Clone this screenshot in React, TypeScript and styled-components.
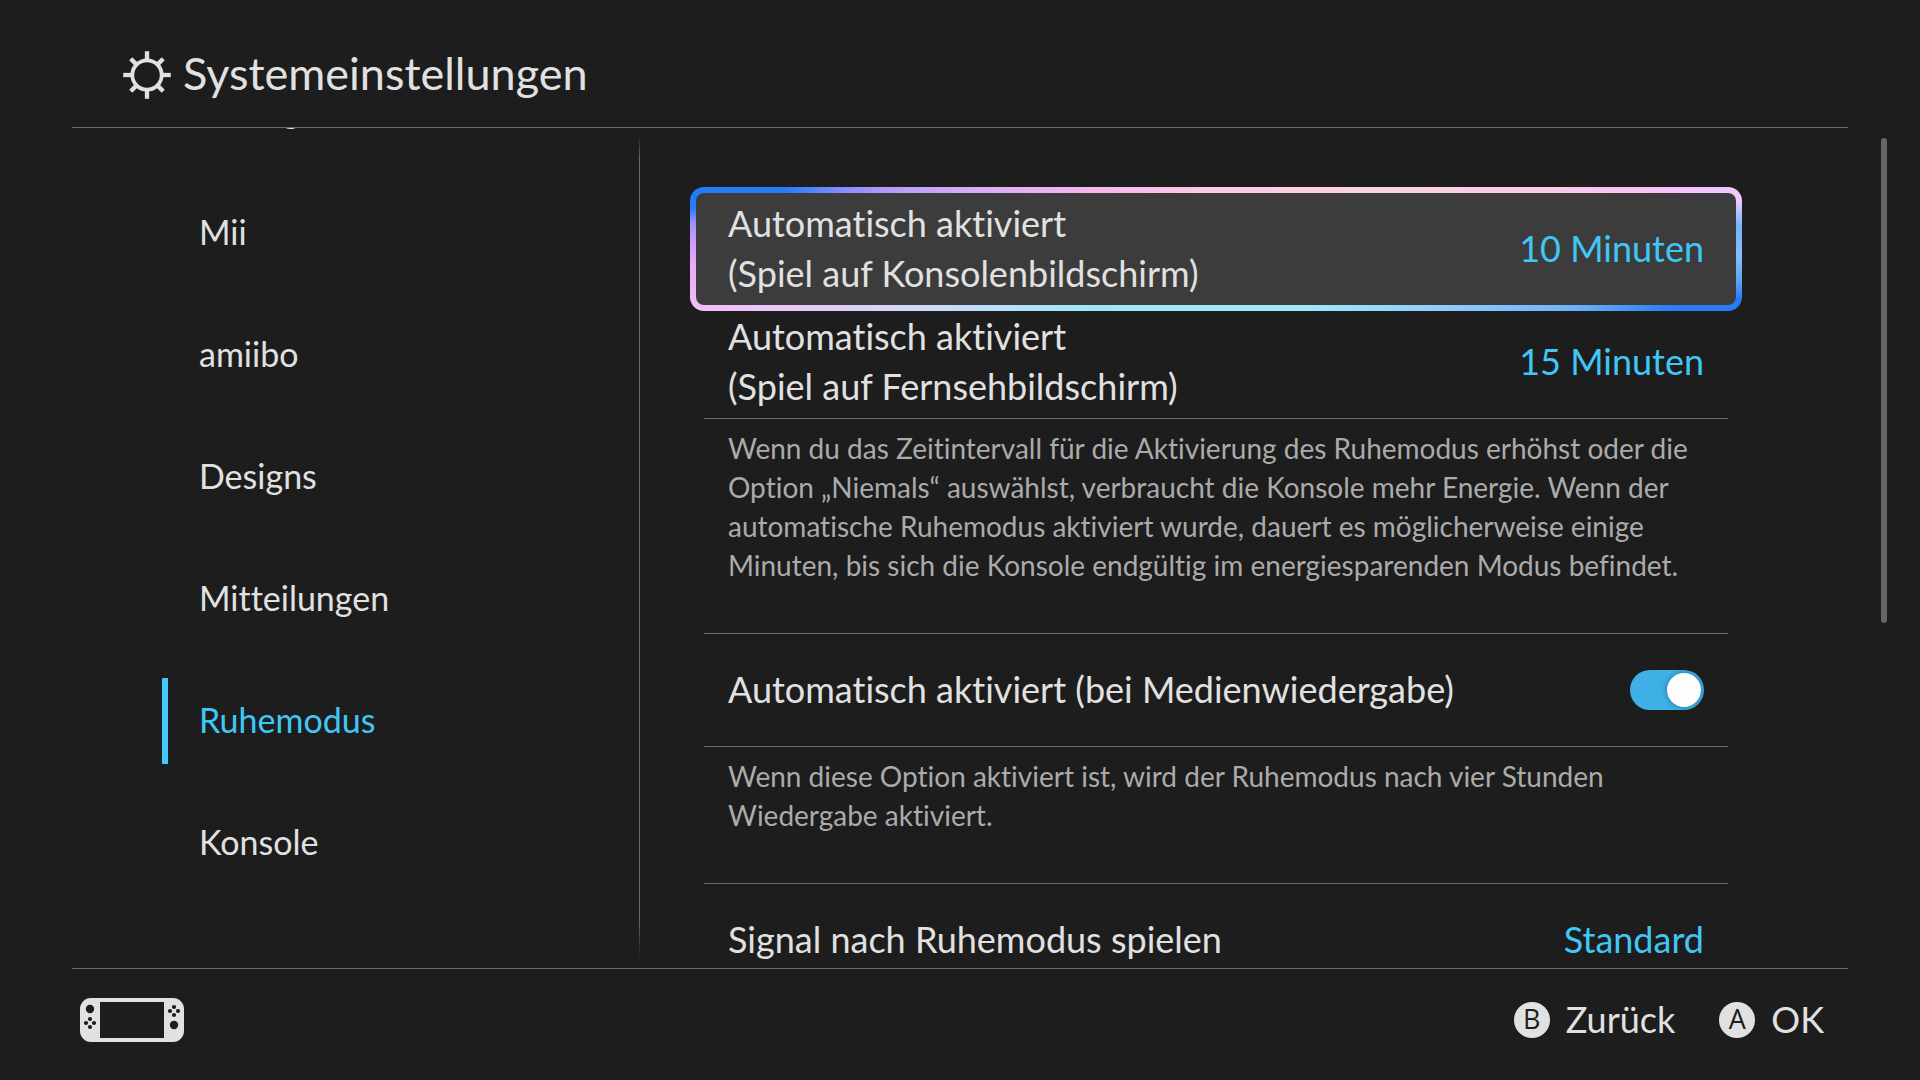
import React, { useState } from "react";
import styled, { createGlobalStyle, css } from "styled-components";

const color = {
  page: "#1d1d1d",
  text: "#e1e1e1",
  muted: "#ababab",
  line: "#6c6c6c",
  accent: "#41c7f6",
  focus: "#3c3c3c",
};

const GlobalStyle = createGlobalStyle`
  *, *::before, *::after { box-sizing: border-box; }
  body {
    margin: 0;
    background: ${color.page};
    color: ${color.text};
    font-family: Lato, "Open Sans", sans-serif;
    font-variant-ligatures: none;
  }
  button { font: inherit; color: inherit; background: none; border: 0; padding: 0; cursor: pointer; }
  ul { list-style: none; margin: 0; padding: 0; }
`;

const Page = styled.div`
  display: flex;
  flex-direction: column;
  height: 100vh;
  overflow: hidden;
`;

const Header = styled.header`
  display: flex;
  align-items: center;
  gap: 12px;
  margin: 0 72px;
  padding: 48px 51px 25px;
  border-bottom: 1px solid ${color.line};
`;

const Title = styled.h1`
  margin: 0;
  padding-bottom: 4px;
  font-size: 45px;
  font-weight: 400;
  line-height: 50px;
`;

const Main = styled.main`
  flex: 1;
  min-height: 0;
  display: grid;
  grid-template-columns: calc(100% / 3 - 1px) 1px minmax(0, 1fr) 39px;
  overflow: hidden;
`;

const Sidebar = styled.nav`
  min-height: 0;
  overflow: hidden;
  padding-left: 162px;
`;

const Menu = styled.ul`
  display: flex;
  flex-direction: column;
  gap: 36px;
  margin-top: -60px;
`;

const MenuLink = styled.a<{ $active?: boolean }>`
  display: flex;
  align-items: center;
  height: 86px;
  padding: 0 0 2px 37px;
  font-size: 34px;
  line-height: 50px;
  text-decoration: none;
  color: ${(p) => (p.$active ? color.accent : color.text)};
  ${(p) =>
    p.$active &&
    css`
      background: linear-gradient(#41c9fd, #41c9fd) left / 6px 100% no-repeat;
      border-radius: 1px;
    `}
`;

const Divider = styled.div`
  margin: 8px 0 10px;
  background: linear-gradient(
    transparent,
    ${color.line} 24px,
    ${color.line} calc(100% - 40px),
    transparent
  );
`;

const Panel = styled.section`
  min-height: 0;
  overflow: hidden;
  padding: 65px 153px 0 64px;
`;

const Item = styled.li`
  border-bottom: 1px solid ${color.line};
`;

const rowLayout = css`
  display: flex;
  align-items: center;
  justify-content: space-between;
  text-align: left;
  font-size: 36px;
  line-height: 50px;
`;

const OptionButton = styled.button<{ $focused?: boolean }>`
  && {
    ${rowLayout}
    width: 100%;
    height: 112px;
    padding: 0 24px;
    ${(p) =>
      p.$focused &&
      css`
        width: calc(100% + 28px);
        height: 124px;
        margin: -6px -14px;
        padding: 0 32px;
        border: 6px solid transparent;
        border-radius: 14px;
        background:
          linear-gradient(${color.focus}, ${color.focus}) padding-box,
          linear-gradient(90deg, #247cf5 0%, #247cf5 9%, #8f8efc 15%, #b79bfa 19%, #d9adf6 27%, #f6b6ee 38%, #fbcbe6 50%, #f9d3e0 66%, #f8cbe8 80%, #f6c2fa 93%, #edcaff 100%) top / 100% 14px no-repeat border-box,
          linear-gradient(90deg, #f3bbf8 0%, #ecc6f6 7%, #d0daf8 22%, #a0e6f8 38%, #9fe8fa 58%, #90cbfb 72%, #6db2fb 84%, #2a80f4 93%, #247cf5 100%) bottom / 100% 14px no-repeat border-box,
          linear-gradient(#247cf5 0%, #2a7bf7 17%, #9a8ffb 28%, #c59cfc 42%, #e7abfb 62%, #f3bbf8 100%) left / 14px 100% no-repeat border-box,
          linear-gradient(#edcaff 0%, #e6caff 12%, #9dbdfb 24%, #76b4fd 32%, #86beff 55%, #62a6fa 74%, #2a80f4 90%, #247cf5 100%) right / 14px 100% no-repeat border-box;
      `}
  }
`;

const SwitchRow = styled.label`
  ${rowLayout}
  height: 112px;
  padding: 0 24px;
  cursor: pointer;
`;

const Caption = styled.span`
  padding-bottom: 3px;
`;

const Value = styled(Caption)`
  color: ${color.accent};
`;

const Toggle = styled.input`
  appearance: none;
  display: flex;
  align-items: center;
  width: 74px;
  height: 40px;
  margin: 0;
  padding: 0 3px;
  border-radius: 20px;
  background: #555555;
  cursor: pointer;

  &::before {
    content: "";
    width: 34px;
    height: 34px;
    border-radius: 50%;
    background: #fdfdfd;
    box-shadow: 0 0 6px rgba(0, 0, 0, 0.35);
  }

  &:checked {
    justify-content: flex-end;
    background: #3eb0e6;
  }
`;

const Hint = styled.p`
  margin: 0;
  padding: 10px 12px 48px 24px;
  font-size: 28px;
  line-height: 39px;
  color: ${color.muted};
`;

const ScrollThumb = styled.div`
  width: 6px;
  height: calc(58% - 2px);
  margin-top: 10px;
  border-radius: 3px;
  background: #666666;
`;

const Footer = styled.footer`
  display: flex;
  align-items: center;
  justify-content: space-between;
  margin: 0 72px;
  padding: 29px 24px 38px 8px;
  border-top: 1px solid ${color.line};
`;

const Actions = styled.div`
  display: flex;
  gap: 44px;
`;

const Action = styled.button`
  && {
    display: flex;
    align-items: center;
    gap: 16px;
    height: 44px;
    font-size: 36px;
    line-height: 40px;
  }
`;

const Key = styled.span`
  display: grid;
  place-items: center;
  width: 36px;
  height: 36px;
  border-radius: 50%;
  background: ${color.text};
  color: ${color.page};
  font-family: "Open Sans", Lato, sans-serif;
  font-size: 27px;
  font-weight: 500;
  line-height: 34px;
  padding-bottom: 2px;
`;

const GearIcon = () => (
  <svg width="48" height="48" viewBox="0 0 48 48" fill="none" stroke={color.text} strokeWidth="4.3" aria-hidden="true">
    <circle cx="24" cy="24" r="14.7" strokeWidth="3.8" />
    {[0, 45, 90, 135, 180, 225, 270, 315].map((a) => (
      <path key={a} d={a % 90 ? "M24 9V1" : "M24 9V0.2"} transform={`rotate(${a} 24 24)`} />
    ))}
  </svg>
);

const ConsoleIcon = () => (
  <svg width="104" height="44" viewBox="0 0 104 44" role="img" aria-label="Konsole">
    <rect width="104" height="44" rx="11" fill={color.text} />
    <g fill={color.page}>
      <rect x="20" y="4" width="64" height="36" />
      <circle cx="10" cy="11" r="4.2" />
      <circle cx="10" cy="21" r="2.1" />
      <circle cx="6" cy="25" r="2.1" />
      <circle cx="14" cy="25" r="2.1" />
      <circle cx="10" cy="29" r="2.1" />
      <circle cx="94" cy="9" r="2.1" />
      <circle cx="90" cy="13" r="2.1" />
      <circle cx="98" cy="13" r="2.1" />
      <circle cx="94" cy="17" r="2.1" />
      <circle cx="94" cy="27" r="4.2" />
    </g>
  </svg>
);

const sections = ["Anzeige", "Mii", "amiibo", "Designs", "Mitteilungen", "Ruhemodus", "Konsole"];

export default function App() {
  const [active, setActive] = useState("Ruhemodus");
  const [media, setMedia] = useState(true);

  return (
    <Page>
      <GlobalStyle />
      <Header>
        <GearIcon />
        <Title>Systemeinstellungen</Title>
      </Header>
      <Main>
        <Sidebar>
          <Menu>
            {sections.map((name) => (
              <li key={name}>
                <MenuLink
                  href={`#${name}`}
                  $active={name === active}
                  aria-current={name === active ? "page" : undefined}
                  onClick={() => setActive(name)}
                >
                  {name}
                </MenuLink>
              </li>
            ))}
          </Menu>
        </Sidebar>
        <Divider />
        <Panel>
          <ul>
            <Item>
              <OptionButton type="button" $focused>
                <Caption>
                  Automatisch aktiviert
                  <br />
                  (Spiel auf Konsolenbildschirm)
                </Caption>
                <Value>10 Minuten</Value>
              </OptionButton>
            </Item>
            <Item>
              <OptionButton type="button">
                <Caption>
                  Automatisch aktiviert
                  <br />
                  (Spiel auf Fernsehbildschirm)
                </Caption>
                <Value>15 Minuten</Value>
              </OptionButton>
            </Item>
            <Item>
              <Hint>
                Wenn du das Zeitintervall für die Aktivierung des Ruhemodus erhöhst oder die Option „Niemals“
                auswählst, verbraucht die Konsole mehr Energie. Wenn der automatische Ruhemodus aktiviert wurde,
                dauert es möglicherweise einige Minuten, bis sich die Konsole endgültig im energiesparenden Modus
                befindet.
              </Hint>
            </Item>
            <Item>
              <SwitchRow htmlFor="media-sleep">
                <Caption>Automatisch aktiviert (bei Medienwiedergabe)</Caption>
                <Toggle
                  id="media-sleep"
                  type="checkbox"
                  role="switch"
                  checked={media}
                  onChange={(e) => setMedia(e.target.checked)}
                />
              </SwitchRow>
            </Item>
            <Item>
              <Hint>Wenn diese Option aktiviert ist, wird der Ruhemodus nach vier Stunden Wiedergabe aktiviert.</Hint>
            </Item>
            <Item>
              <OptionButton type="button">
                <Caption>Signal nach Ruhemodus spielen</Caption>
                <Value>Standard</Value>
              </OptionButton>
            </Item>
          </ul>
        </Panel>
        <ScrollThumb />
      </Main>
      <Footer>
        <ConsoleIcon />
        <Actions>
          <Action type="button">
            <Key>B</Key>
            <Caption>Zurück</Caption>
          </Action>
          <Action type="button">
            <Key>A</Key>
            <Caption>OK</Caption>
          </Action>
        </Actions>
      </Footer>
    </Page>
  );
}
